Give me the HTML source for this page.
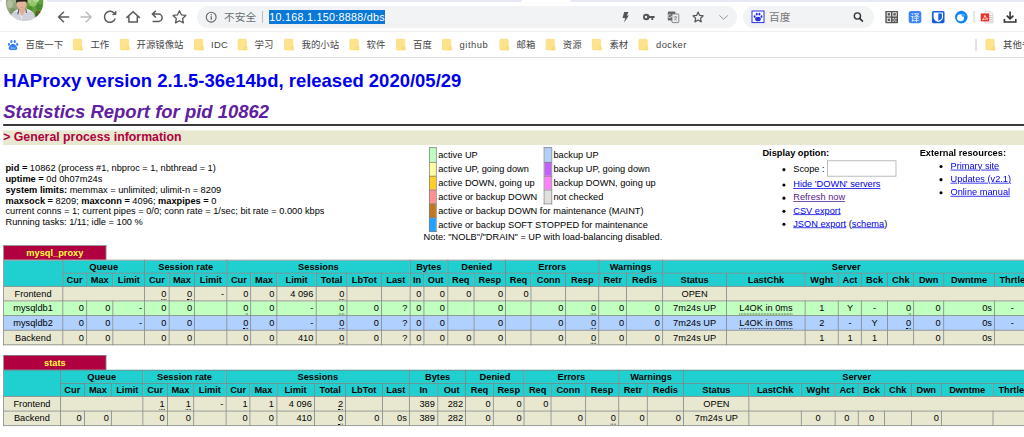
<!DOCTYPE html>
<html><head><meta charset="utf-8"><title>Statistics Report for HAProxy</title>
<style>
html,body{margin:0;padding:0;background:#fff;}
body{width:1024px;height:437px;overflow:hidden;position:relative;}
#chrome{position:absolute;left:0;top:0;width:1024px;height:58px;background:#fff;z-index:5;overflow:hidden;font-family:"Liberation Sans","Noto Sans CJK SC",sans-serif;}
#chrome .strip{position:absolute;top:0;height:2.4px;background:#e6e8f4;}
#chrome .tbline{position:absolute;left:0;top:31.2px;width:1024px;height:1px;background:#f0f0f0;}
#chrome .bmline{position:absolute;left:0;top:56.8px;width:1024px;height:1px;background:#e0e0e0;}
#chrome .pill{position:absolute;top:6.4px;height:21.6px;border-radius:10.8px;background:#f1f3f4;}
#chrome .ico{position:absolute;left:0;top:0;}
#chrome .t{position:absolute;white-space:nowrap;line-height:14px;}
#chrome .ns{font-size:10.7px;color:#6a6d70;}
#chrome .sb{font-size:10.7px;color:#777;}
#chrome .sepv{position:absolute;width:1px;}
#chrome .url{position:absolute;left:269.2px;top:9.8px;height:14.2px;line-height:14.4px;font-size:10.78px;color:#fff;background:#0a78d7;white-space:nowrap;letter-spacing:0.27px;}
#chrome .bm{top:38.4px;font-size:9.4px;color:#444;}
#vp{position:absolute;left:-3.4px;top:58.2px;width:1349px;height:500px;transform:scale(0.77);transform-origin:0 0;overflow:hidden;}
#pg{margin:8px;font-family:"Liberation Sans",Arial,Helvetica,sans-serif;font-size:12px;font-weight:normal;color:#000;background:#fff;}
#pg th,#pg td{font-size:12px;}
#pg h1{font-size:24px;margin:16.08px 0 12px 0;font-weight:bold;}
#pg h1 a{color:#0000ee;text-decoration:none;}
#pg h2{font-size:24px;font-weight:bold;font-style:italic;color:#6020a0;margin:0;}
#pg h3{line-height:18.5px;font-size:16px;font-weight:bold;color:#b00040;background:#e8e8d0;margin:0;}
#pg li{margin-top:3.3px;margin-right:2em;}
#pg .hr{margin-top:2.4px;margin-bottom:5.6px;border:0;border-bottom:2px solid #000;height:0;}
.titre{background:#20D0D0;color:#000;font-weight:bold;text-align:center;}
.frontend{background:#e8e8d0;}
.backend{background:#e8e8d0;}
.active_down{background:#ff9090;}
.active_going_up{background:#ffd020;}
.active_going_down{background:#ffffa0;}
.active_up{background:#c0ffc0;}
.active_draining{background:#20a0FF;}
.active_no_check{background:#e0e0e0;}
.backup_going_up{background:#ff80ff;}
.backup_going_down{background:#c060ff;}
.backup_up{background:#b0d0ff;}
.maintain{background:#c07820;}
.rls{letter-spacing:0.2em;margin-right:1px;}
#pg a{color:#0000ee;text-decoration:underline;}
#pg a.v{color:#551a8b;}
#pg a.px{color:#ffff40;text-decoration:none;}
#pg a.lfsb{color:#000;text-decoration:none;}
table.tbl{border-collapse:collapse;border-style:none;}
table.tbl td{text-align:right;border:1px solid gray;padding:2px 3px;white-space:nowrap;}
table.tbl td.ac{text-align:center;}
table.tbl th{border:1px solid gray;}
table.tbl th.pxname{background:#b00040;color:#ffff40;font-weight:bold;border-style:solid solid none solid;padding:2px 3px;white-space:nowrap;}
table.tbl th.empty{border-style:none;empty-cells:hide;background:#fff;}
table.pxt tr{background:#fff;}
table.lgd{border-collapse:collapse;border-width:1px;border-style:none none none solid;border-color:black;}
table.lgd td{border:1px solid gray;padding:2px 2.5px;}
table.lgd td.noborder{border-style:none;padding:2px;white-space:nowrap;text-align:left;}
u{text-decoration:none;border-bottom:1px dotted black;}
#pg p{margin:12.7px 0;}
#pg ul{margin:0.25em 0 12px 0;padding-left:40px;}
#pg input{font:13.33px "Liberation Sans",sans-serif;border:1px solid #a9a9a9;padding:1px 2px;width:83.5px;height:16.6px;box-sizing:content-box;margin:-0.8px 0;background:#fff;}
#pg form{margin:0;}
</style></head>
<body>
<div id="chrome">
<div class="strip" style="left:47px;width:474.6px;border-radius:0 0 2.4px 0;"></div><div class="strip" style="left:570px;width:454px;border-radius:0 0 0 2.4px;"></div><div class="strip" style="left:0;width:2.4px;"></div>
<div class="tbline"></div>
<div class="bmline"></div>
<div class="pill" style="left:196.6px;width:540.2px;"></div>
<div class="pill" style="left:743px;width:131px;"></div>
<span class="t ns" style="left:224px;top:10px;">不安全</span>
<span class="sepv" style="left:262px;top:11px;height:12px;background:#bbb;"></span>
<span class="url">10.168.1.150:8888/dbs</span>
<span class="t sb" style="left:769px;top:10px;">百度</span>
<svg class="ico" width="1024" height="58" viewBox="0 0 1024 58">
<defs><filter id="bl" x="-10%" y="-10%" width="120%" height="120%"><feGaussianBlur stdDeviation="0.45"/></filter><clipPath id="av"><circle cx="24.6" cy="2.4" r="18.7"/></clipPath>
<g id="fold"><rect x="0.3" y="-0.7" width="8.3" height="10.6" rx="0.9" fill="#fde38b" stroke="#fad76c" stroke-width="0.6"/><path d="M7 9.9v-2.4q0-0.9 0.9-0.9h0.5q0.9 0 0.9 0.9v2.4z" fill="#fde691" stroke="#f6cf5e" stroke-width="0.6"/></g>
</defs>
<!-- avatar -->
<g clip-path="url(#av)"><g filter="url(#bl)">
<rect x="3" y="-4" width="44" height="28" fill="#7fa35a"/>
<rect x="3" y="-4" width="15" height="28" fill="#94a57e"/>
<ellipse cx="10" cy="4" rx="3" ry="4" fill="#b3bf9e"/><ellipse cx="14" cy="1" rx="2" ry="2.6" fill="#a3b48a"/><ellipse cx="13" cy="11" rx="3" ry="3" fill="#7d9464"/>
<rect x="27" y="-4" width="20" height="28" fill="#62a03c"/>
<ellipse cx="33" cy="3" rx="4" ry="3.4" fill="#93c76a"/><ellipse cx="36" cy="0" rx="3" ry="2.2" fill="#b4d894"/><ellipse cx="29.5" cy="1" rx="1.8" ry="2.4" fill="#a9cf86"/><ellipse cx="39" cy="7" rx="3.4" ry="3" fill="#4d8a30"/>
<ellipse cx="30" cy="9" rx="2.6" ry="3" fill="#4f8f33"/><ellipse cx="38" cy="14" rx="2.6" ry="3.4" fill="#386826"/>
<path d="M37.2 11.2l2 3.2" stroke="#d8432e" stroke-width="1.1"/>
<path d="M10 24 L11.6 14.6 Q13.6 10.6 18.4 9 L26.6 8.8 Q32.6 10.4 34.4 14.6 L36 24 Z" fill="#e6e6ee"/>
<path d="M13 12.8h20M12 14.9h23M11.6 17h24M11.4 19.1h24M12 21h22" stroke="#a9a9b8" stroke-width="0.7" fill="none"/>
<path d="M18.6 8.8 L22 16.4 L26 8.8 Z" fill="#dfae94"/>
<path d="M22 16.4 l-1.6 -3 1.6 7z" fill="#f4f4f8"/>
<path d="M18.9 9.2l-1.1 5.2M25.9 9.2l0.6 3.6" stroke="#4a4038" stroke-width="1" fill="none"/>
<ellipse cx="21.6" cy="4.2" rx="5" ry="5.4" fill="#e3b39a"/>
<path d="M16.2 3.4 L16.2 -4 L27.2 -4 L27.2 3.2 Q26.6 1.6 25 1.6 L18.4 1.8 Q16.8 1.8 16.2 3.4Z" fill="#25211f"/>
<ellipse cx="21.8" cy="7.2" rx="1" ry="0.5" fill="#d98a86"/>
</g></g>
<!-- nav icons -->
<g fill="none" stroke="#5a5a5a" stroke-width="1.5" stroke-linecap="square" stroke-linejoin="miter">
<path d="M68.5 17H59.2M63.4 12.2L58.6 17l4.8 4.8"/>
<path d="M81.2 17h9.3M86.3 12.2l4.8 4.8-4.8 4.8" stroke="#bcbcbc"/>
<path d="M114.3 13.4A5.5 5.5 0 1 0 115.2 18.6" stroke-linecap="butt"/>
<path d="M115.9 11v3.6h-3.6" stroke-linecap="butt" fill="#5a5a5a" stroke-width="1"/>
<path d="M126.4 17.9l6.7-6.2 6.7 6.2M128.9 16.4v5.7h8.4v-5.7" stroke-linecap="butt"/>
<path d="M152.6 14.1h5.9a3.65 3.65 0 0 1 0 7.3h-5.9M155.9 10.7l-3.5 3.4 3.5 3.4" stroke-linecap="butt"/>
<path d="M179.45 10.80L181.39 14.83L185.82 15.43L182.59 18.52L183.39 22.92L179.45 20.80L175.51 22.92L176.31 18.52L173.08 15.43L177.51 14.83z" stroke-width="1.3" stroke-linejoin="round"/>
</g>
<!-- info icon -->
<circle cx="211.2" cy="17.2" r="4.9" fill="none" stroke="#5f6368" stroke-width="1.1"/>
<path d="M211.2 16.3v3.4" stroke="#5f6368" stroke-width="1.2"/><circle cx="211.2" cy="14.7" r="0.7" fill="#5f6368"/>
<!-- omnibox right icons -->
<path d="M624.2 12h4.3l-1.7 3.6h2l-4.6 7 0.9-4.7h-2.6z" fill="#555"/>
<g fill="#555"><circle cx="646.3" cy="17" r="3.3"/><rect x="648" y="16" width="6.6" height="2"/><rect x="651.4" y="16" width="1.8" height="4"/></g><circle cx="646" cy="17" r="1.2" fill="#f1f3f4"/>
<g><rect x="667.8" y="11.6" width="7.6" height="9" rx="0.8" fill="#666"/><rect x="672" y="14" width="6.8" height="8.6" rx="0.6" fill="#f1f3f4" stroke="#777" stroke-width="0.9"/><path d="M673.6 17h3.6M675.4 16v1M674 20.5q2-1.2 2.6-3.4M674.4 18.4q1 1.4 2.6 2" stroke="#666" stroke-width="0.6" fill="none"/><path d="M672.4 16.6h-1.3a1.6 1.6 0 1 1-0.4-1.5" stroke="#f1f3f4" stroke-width="0.8" fill="none"/></g>
<path d="M698.10 12.10L699.63 15.40L703.24 15.83L700.57 18.30L701.27 21.87L698.10 20.10L694.93 21.87L695.63 18.30L692.96 15.83L696.57 15.40z" fill="none" stroke="#555" stroke-width="1.2" stroke-linejoin="round"/>
<path d="M719.4 15.4l4.2 3.8 4.2-3.8" fill="none" stroke="#8c8c8c" stroke-width="0.9"/>
<!-- baidu search icon -->
<rect x="752" y="11" width="12" height="11.6" fill="#fff" stroke="#2932e1" stroke-width="1"/>
<g fill="#2932e1"><ellipse cx="758" cy="19" rx="2.9" ry="2.3"/><ellipse cx="754.6" cy="16.6" rx="0.95" ry="1.3"/><ellipse cx="756.7" cy="14.2" rx="0.95" ry="1.35"/><ellipse cx="759.4" cy="14.2" rx="0.95" ry="1.35"/><ellipse cx="761.5" cy="16.6" rx="0.95" ry="1.3"/></g>
<!-- magnifier -->
<circle cx="857.4" cy="16" r="3.1" fill="none" stroke="#333" stroke-width="1.4"/><path d="M859.7 18.4l3.2 3.2" stroke="#333" stroke-width="1.6"/>
<!-- QR -->
<rect x="885.3" y="10.9" width="12.7" height="12.3" rx="0.6" fill="#575757"/>
<g fill="none" stroke="#f4f4f4" stroke-width="0.9"><rect x="887.2" y="12.7" width="3.3" height="3.3"/><rect x="892.9" y="12.7" width="3.3" height="3.3"/><rect x="887.2" y="18.2" width="3.3" height="3.3"/></g>
<g fill="#e8e8e8"><rect x="892.5" y="17.9" width="1.3" height="1.3"/><rect x="895.2" y="17.9" width="1.3" height="1.3"/><rect x="893.8" y="19.3" width="1.3" height="1.2"/><rect x="892.5" y="20.7" width="1.3" height="1.2"/><rect x="895.2" y="20.7" width="1.3" height="1.2"/></g>
<!-- yi -->
<rect x="908.7" y="10.9" width="12.6" height="12.4" rx="2.4" fill="#3b82f6"/>
<text x="915" y="20.6" font-family="'Liberation Sans','Noto Sans CJK SC',sans-serif" font-size="9" fill="#fff" text-anchor="middle">译</text>
<!-- bitwarden -->
<rect x="931.9" y="10.9" width="12.6" height="12.4" rx="1.6" fill="#175ddc"/>
<path d="M933.6 12.4h9.4v5q0 2.8-4.7 4.6q-4.7-1.8-4.7-4.6z" fill="#fff"/><path d="M938.3 13.5h3.6v3.9q0 1.9-3.6 3.4z" fill="#175ddc"/>
<!-- blue circle -->
<circle cx="961.3" cy="17.1" r="6.3" fill="#0f86f5"/><circle cx="960.5" cy="17.7" r="3.5" fill="#fff"/><circle cx="963.3" cy="15.3" r="1.7" fill="#4aa6f8"/>
<path d="M974 11v12" stroke="#d0d0d0" stroke-width="1"/>
<!-- pdf -->
<path d="M985 11.2h5.2l2.8 2.8v9h-8z" fill="#f4f4f4" stroke="#c8c8c8" stroke-width="0.6"/><path d="M989 15.5h3.4M989 17.5h3.4M989 19.5h3.4M989 21.2h3.4" stroke="#bdbdbd" stroke-width="0.7"/>
<rect x="980.7" y="13.4" width="8.4" height="8" fill="#e5352d"/><path d="M982.3 20q1.8-1.2 2.6-4.8q0.6 3 3 3.8q-3.2-0.2-5.6 1z" fill="none" stroke="#fff" stroke-width="0.7"/>
<!-- download -->
<path d="M1010.1 11.4v7M1006.8 15.6l3.3 3.2 3.3-3.2" fill="none" stroke="#333" stroke-width="1.6"/><path d="M1004.4 19v3h11.4v-3" fill="none" stroke="#333" stroke-width="1.6"/>
<!-- bookmark bar -->
<g fill="#2f7df6"><path d="M13 43.7C15 43.7 17.5 47 17.3 48.6C17.1 50.2 15.4 50.2 13 50.1C10.6 50.2 8.9 50.2 8.7 48.6C8.5 47 11 43.7 13 43.7Z"/><ellipse cx="8.9" cy="44.4" rx="1.05" ry="1.4"/><ellipse cx="11.4" cy="41.5" rx="1.05" ry="1.5"/><ellipse cx="14.8" cy="41.5" rx="1.05" ry="1.5"/><ellipse cx="17.2" cy="44.4" rx="1.05" ry="1.4"/></g>
<g fill="none" stroke="#e6effe" stroke-width="0.45"><rect x="10.9" y="47.4" width="1.5" height="1.4" rx="0.4"/><path d="M13.6 47.2v1.2q0 0.5 0.6 0.5h0.3q0.6 0 0.6-0.5v-1.2"/></g>
<use href="#fold" x="73" y="40"/><use href="#fold" x="120" y="40"/><use href="#fold" x="194.2" y="40"/><use href="#fold" x="237.8" y="40"/>
<use href="#fold" x="284.2" y="40"/><use href="#fold" x="349.6" y="40"/><use href="#fold" x="396" y="40"/><use href="#fold" x="442.2" y="40"/>
<use href="#fold" x="499.6" y="40"/><use href="#fold" x="545.8" y="40"/><use href="#fold" x="592" y="40"/><use href="#fold" x="638.6" y="40"/>
<use href="#fold" x="985.6" y="40"/>
<path d="M976 39v12" stroke="#c4c4c4" stroke-width="1"/>
</svg>
<span class="t bm" style="left:25.6px;">百度一下</span>
<span class="t bm" style="left:90.4px;">工作</span>
<span class="t bm" style="left:136.6px;">开源镜像站</span>
<span class="t bm" style="left:211px;letter-spacing:0.3px;">IDC</span>
<span class="t bm" style="left:254.6px;">学习</span>
<span class="t bm" style="left:301.6px;">我的小站</span>
<span class="t bm" style="left:366.6px;">软件</span>
<span class="t bm" style="left:413px;">百度</span>
<span class="t bm" style="left:459.6px;letter-spacing:0.5px;">github</span>
<span class="t bm" style="left:516.6px;">邮箱</span>
<span class="t bm" style="left:562.8px;">资源</span>
<span class="t bm" style="left:609.4px;">素材</span>
<span class="t bm" style="left:656px;letter-spacing:0.45px;">docker</span>
<span class="t bm" style="left:1003px;">其他书签</span>
</div>
<div id="vp"><div id="pg">
<h1><a>HAProxy version 2.1.5-36e14bd, released 2020/05/29</a></h1>
<h2>Statistics Report for pid 10862</h2>
<hr width="100%" class="hr">
<h3>&gt; General process information</h3>
<table border=0><tr><td align="left" nowrap width="1%">
<p><b>pid = </b> 10862 (process #1, nbproc = 1, nbthread = 1)<br>
<b>uptime = </b> 0d 0h07m24s<br>
<b>system limits:</b> memmax = unlimited; ulimit-n = 8209<br>
<b>maxsock = </b> 8209; <b>maxconn = </b> 4096; <b>maxpipes = </b> 0<br>
current conns = 1; current pipes = 0/0; conn rate = 1/sec; bit rate = 0.000 kbps<br>
Running tasks: 1/11; idle = 100 %<br>
</td><td align="center" nowrap style="position:relative;left:-0.5px">
<table class="lgd"><tr>
<td class="active_up">&nbsp;</td><td class="noborder">active UP </td>
<td class="backup_up">&nbsp;</td><td class="noborder">backup UP </td>
</tr><tr>
<td class="active_going_down"></td><td class="noborder">active UP, going down </td>
<td class="backup_going_down"></td><td class="noborder">backup UP, going down </td>
</tr><tr>
<td class="active_going_up"></td><td class="noborder">active DOWN, going up </td>
<td class="backup_going_up"></td><td class="noborder">backup DOWN, going up </td>
</tr><tr>
<td class="active_down"></td><td class="noborder">active or backup DOWN &nbsp;</td>
<td class="active_no_check"></td><td class="noborder">not checked </td>
</tr><tr>
<td class="maintain"></td><td class="noborder" colspan="3">active or backup DOWN for maintenance (MAINT) &nbsp;</td>
</tr><tr>
<td class="active_draining"></td><td class="noborder" colspan="3">active or backup SOFT STOPPED for maintenance &nbsp;</td>
</tr></table>
Note: "NOLB"/"DRAIN" = UP with load-balancing disabled.
</td>
<td align="left" valign="top" nowrap width="1%" style="position:relative;left:0.3px">
<b>Display option:</b><ul>
<li style="margin-top:4.7px"><form>Scope : <input value="" size="8"></form>
<li><a>Hide 'DOWN' servers</a><br>
<li><a class="v">Refresh now</a><br>
<li><a>CSV export</a><br>
<li><a>JSON export</a> (<a>schema</a>)<br>
</ul></td>
<td align="left" valign="top" nowrap width="1%" style="position:relative;left:3px">
<b>External resources:</b><ul>
<li><a>Primary site</a><br>
<li><a>Updates (v2.1)</a><br>
<li><a>Online manual</a><br>
</ul></td></tr></table>

<!--PROXY1--><table class="tbl pxt" width="100%"><tr class="titre"><th class="pxname" width="10%"><a class="px">mysql_proxy</a></th><th class="empty" width="90%"></th></tr></table>
<table class="tbl" width="100%" style="table-layout:fixed;width:1333px"><colgroup><col style="width:76.62px"><col style="width:31.17px"><col style="width:34.42px"><col style="width:41.23px"><col style="width:31.49px"><col style="width:33.44px"><col style="width:41.56px"><col style="width:31.49px"><col style="width:33.77px"><col style="width:50.65px"><col style="width:40.26px"><col style="width:44.81px"><col style="width:37.01px"><col style="width:18.18px"><col style="width:30.52px"><col style="width:34.42px"><col style="width:41.23px"><col style="width:33.12px"><col style="width:45.13px"><col style="width:42.53px"><col style="width:36.36px"><col style="width:46.43px"><col style="width:83.44px"><col style="width:101.95px"><col style="width:43.18px"><col style="width:29.87px"><col style="width:34.09px"><col style="width:34.09px"><col style="width:38.31px"><col style="width:66.56px"><col style="width:45.66px"></colgroup>
<tr class="titre"><th rowspan=2></th><th colspan=3>Queue</th><th colspan=3>Session rate</th><th colspan=6>Sessions</th><th colspan=2>Bytes</th><th colspan=2>Denied</th><th colspan=3>Errors</th><th colspan=2>Warnings</th><th colspan=9>Server</th></tr>
<tr class="titre"><th>Cur</th><th>Max</th><th>Limit</th><th>Cur</th><th>Max</th><th>Limit</th><th>Cur</th><th>Max</th><th>Limit</th><th>Total</th><th>LbTot</th><th>Last</th><th>In</th><th>Out</th><th>Req</th><th>Resp</th><th>Req</th><th>Conn</th><th>Resp</th><th>Retr</th><th>Redis</th><th>Status</th><th>LastChk</th><th>Wght</th><th>Act</th><th>Bck</th><th>Chk</th><th>Dwn</th><th>Dwntme</th><th>Thrtle</th></tr>
<tr class="frontend"><td class=ac><a class=lfsb>Frontend</a></td><td colspan=3></td><td><u>0</u></td><td><u>0</u></td><td>-</td><td>0</td><td>0</td><td><span class="rls">4</span>096</td><td><u>0</u></td><td></td><td></td><td>0</td><td>0</td><td>0</td><td>0</td><td>0</td><td></td><td></td><td></td><td></td><td class=ac>OPEN</td><td class=ac colspan=8></td></tr>
<tr class="active_up"><td class=ac><a class=lfsb>mysqldb1</a></td><td>0</td><td>0</td><td>-</td><td>0</td><td>0</td><td></td><td><u>0</u></td><td>0</td><td>-</td><td><u>0</u></td><td>0</td><td>?</td><td>0</td><td>0</td><td></td><td>0</td><td></td><td>0</td><td><u>0</u></td><td>0</td><td>0</td><td class=ac>7m24s UP</td><td class=ac><u>L4OK in 0ms</u></td><td class=ac>1</td><td class=ac>Y</td><td class=ac>-</td><td><u>0</u></td><td>0</td><td>0s</td><td class=ac>-</td></tr>
<tr class="backup_up"><td class=ac><a class=lfsb>mysqldb2</a></td><td>0</td><td>0</td><td>-</td><td>0</td><td>0</td><td></td><td><u>0</u></td><td>0</td><td>-</td><td><u>0</u></td><td>0</td><td>?</td><td>0</td><td>0</td><td></td><td>0</td><td></td><td>0</td><td><u>0</u></td><td>0</td><td>0</td><td class=ac>7m24s UP</td><td class=ac><u>L4OK in 0ms</u></td><td class=ac>2</td><td class=ac>-</td><td class=ac>Y</td><td><u>0</u></td><td>0</td><td>0s</td><td class=ac>-</td></tr>
<tr class="backend"><td class=ac><a class=lfsb>Backend</a></td><td>0</td><td>0</td><td></td><td>0</td><td>0</td><td></td><td>0</td><td>0</td><td>410</td><td><u>0</u></td><td>0</td><td>?</td><td>0</td><td>0</td><td>0</td><td>0</td><td></td><td>0</td><td><u>0</u></td><td>0</td><td>0</td><td class=ac>7m24s UP</td><td class=ac>&nbsp;</td><td class=ac>1</td><td class=ac>1</td><td class=ac>1</td><td class=ac>&nbsp;</td><td>0</td><td>0s</td><td></td></tr>
</table><p>
<!--/PROXY1-->
<!--PROXY2--><table class="tbl pxt" width="100%"><tr class="titre"><th class="pxname" width="10%"><a class="px">stats</a></th><th class="empty" width="90%"></th></tr></table>
<table class="tbl" width="100%" style="table-layout:fixed;width:1333px"><colgroup><col style="width:73.70px"><col style="width:31.17px"><col style="width:35.39px"><col style="width:40.91px"><col style="width:31.49px"><col style="width:34.09px"><col style="width:42.21px"><col style="width:31.49px"><col style="width:34.09px"><col style="width:49.35px"><col style="width:40.58px"><col style="width:47.08px"><col style="width:35.71px"><col style="width:36.36px"><col style="width:36.69px"><col style="width:35.71px"><col style="width:40.26px"><col style="width:34.74px"><col style="width:44.81px"><col style="width:42.86px"><col style="width:37.34px"><col style="width:47.08px"><col style="width:85.39px"><col style="width:67.21px"><col style="width:44.48px"><col style="width:30.19px"><col style="width:33.77px"><col style="width:34.42px"><col style="width:39.61px"><col style="width:66.56px"><col style="width:48.26px"></colgroup>
<tr class="titre"><th rowspan=2></th><th colspan=3>Queue</th><th colspan=3>Session rate</th><th colspan=6>Sessions</th><th colspan=2>Bytes</th><th colspan=2>Denied</th><th colspan=3>Errors</th><th colspan=2>Warnings</th><th colspan=9>Server</th></tr>
<tr class="titre"><th>Cur</th><th>Max</th><th>Limit</th><th>Cur</th><th>Max</th><th>Limit</th><th>Cur</th><th>Max</th><th>Limit</th><th>Total</th><th>LbTot</th><th>Last</th><th>In</th><th>Out</th><th>Req</th><th>Resp</th><th>Req</th><th>Conn</th><th>Resp</th><th>Retr</th><th>Redis</th><th>Status</th><th>LastChk</th><th>Wght</th><th>Act</th><th>Bck</th><th>Chk</th><th>Dwn</th><th>Dwntme</th><th>Thrtle</th></tr>
<tr class="frontend"><td class=ac><a class=lfsb>Frontend</a></td><td colspan=3></td><td><u>1</u></td><td><u>1</u></td><td>-</td><td>1</td><td>1</td><td><span class="rls">4</span>096</td><td><u>2</u></td><td></td><td></td><td>389</td><td>282</td><td>0</td><td>0</td><td>0</td><td></td><td></td><td></td><td></td><td class=ac>OPEN</td><td class=ac colspan=8></td></tr>
<tr class="backend"><td class=ac><a class=lfsb>Backend</a></td><td>0</td><td>0</td><td></td><td>0</td><td>0</td><td></td><td>0</td><td>0</td><td>410</td><td><u>0</u></td><td>0</td><td>0s</td><td>389</td><td>282</td><td>0</td><td>0</td><td></td><td>0</td><td><u>0</u></td><td>0</td><td>0</td><td class=ac>7m24s UP</td><td class=ac>&nbsp;</td><td class=ac>0</td><td class=ac>0</td><td class=ac>0</td><td class=ac>&nbsp;</td><td>0</td><td></td><td></td></tr>
</table><p>
<!--/PROXY2-->
</div></div>
</body></html>
